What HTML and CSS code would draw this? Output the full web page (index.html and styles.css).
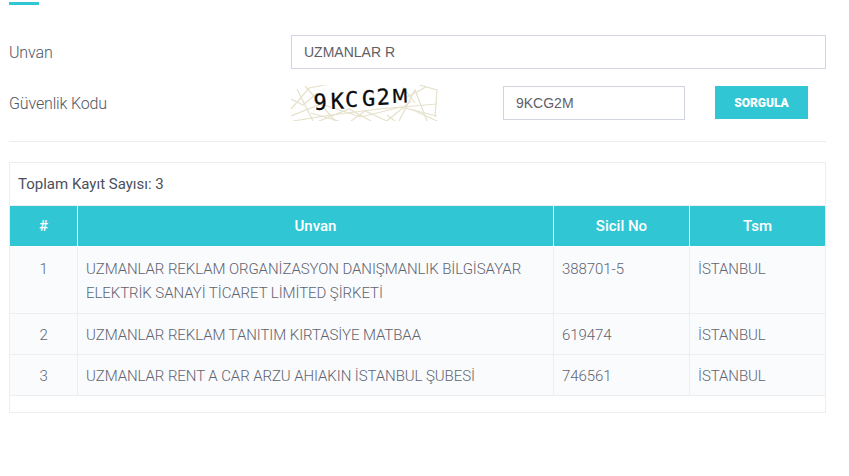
FILE: index.html
```html
<!DOCTYPE html>
<html lang="tr">
<head>
<meta charset="utf-8">
<title>Unvan Sorgulama</title>
<link rel="stylesheet" href="styles.css">
</head>
<body>
<main class="page">
  <div class="accent"></div>
  <form class="form">
    <div class="form-row">
      <label class="label">Unvan</label>
      <input class="input input-wide" type="text" value="UZMANLAR R">
    </div>
    <div class="form-row">
      <label class="label">Güvenlik Kodu</label>
      <div class="captcha-row">
        <svg class="captcha" width="147" height="36" viewBox="0 0 147 36">
          <g class="noise">
            <path d="M0 24 L18 3 L34 0"/>
            <path d="M0 31 L30 19 L70 32 L110 22 L146 31"/>
            <path d="M6 4 L22 36 M14 1 L34 24 L44 36"/>
            <path d="M2 36 L40 30 L88 24 L146 19"/>
            <path d="M28 36 L58 24 L80 36"/>
            <path d="M60 36 L74 26 L96 36 L120 16"/>
            <path d="M108 36 L124 5 L136 36 M120 24 L146 36"/>
            <path d="M128 0 L146 5 L144 32"/>
            <path d="M112 2 L124 18 M135 2 L116 12"/>
            <path d="M20 28 L48 36 M96 30 L104 36"/>
            <path d="M0 14 L12 20 L26 8"/>
          </g>
          <g class="captcha-text">
            <text x="23" y="25" transform="rotate(-3 23 25)">9</text>
            <text x="40" y="24" transform="rotate(-2 40 24)">K</text>
            <text x="54" y="22">C</text>
            <text x="71" y="21">G</text>
            <text x="86" y="20" transform="rotate(-3 86 20)">2</text>
            <text class="captcha-wide" x="101" y="18" transform="rotate(-2 101 18)">M</text>
          </g>
        </svg>
        <input class="input input-code" type="text" value="9KCG2M">
        <button class="button" type="button">SORGULA</button>
      </div>
    </div>
  </form>
  <hr class="divider">
  <section class="panel">
    <div class="total">Toplam Kayıt Sayısı: 3</div>
    <table class="table">
      <colgroup>
        <col class="col-no"><col class="col-name"><col class="col-sicil"><col class="col-tsm">
      </colgroup>
      <thead>
        <tr><th>#</th><th>Unvan</th><th>Sicil No</th><th>Tsm</th></tr>
      </thead>
      <tbody>
        <tr class="tall">
          <td class="num">1</td>
          <td>UZMANLAR REKLAM ORGANİZASYON DANIŞMANLIK BİLGİSAYAR ELEKTRİK SANAYİ TİCARET LİMİTED ŞİRKETİ</td>
          <td>388701-5</td>
          <td>İSTANBUL</td>
        </tr>
        <tr>
          <td class="num">2</td>
          <td>UZMANLAR REKLAM TANITIM KIRTASİYE MATBAA</td>
          <td>619474</td>
          <td>İSTANBUL</td>
        </tr>
        <tr>
          <td class="num">3</td>
          <td>UZMANLAR RENT A CAR ARZU AHIAKIN İSTANBUL ŞUBESİ</td>
          <td>746561</td>
          <td>İSTANBUL</td>
        </tr>
      </tbody>
    </table>
  </section>
</main>
</body>
</html>
```
FILE: styles.css
```css
* { box-sizing: border-box; }

html, body {
  margin: 0;
  background: #fff;
}

body {
  font-family: Roboto, "Liberation Sans", sans-serif;
  font-weight: 300;
  font-size: 16px;
  color: #5a5f6b;
}

.page {
  width: 826px;
  padding: 2px 0 0 9px;
}

.accent {
  width: 30px;
  height: 3px;
  background: #31c6d4;
}

.form {
  margin-top: 30px;
  display: flex;
  flex-direction: column;
  gap: 16px;
}

.form-row {
  display: grid;
  grid-template-columns: 282px 1fr;
  align-items: center;
}

.label {
  font-size: 16px;
  letter-spacing: -0.15px;
  color: #505665;
}

.input {
  height: 34px;
  border: 1px solid #d0d5df;
  background: #fff;
  padding: 0 12px;
  font-family: "Liberation Sans", Arial, sans-serif;
  font-size: 14px;
  color: #5f6068;
  outline: none;
  border-radius: 0;
}

.input-wide { width: 100%; }

.captcha-row {
  display: flex;
  align-items: center;
}

.captcha {
  flex: none;
  display: block;
  margin-right: 65px;
}

.noise path {
  fill: none;
  stroke: #e5e1cb;
  stroke-width: 1.2;
}

.captcha-text text {
  font-family: "DejaVu Sans Mono", monospace;
  font-size: 22px;
  font-weight: 400;
  fill: #0a0a0a;
  stroke: #0a0a0a;
  stroke-width: 0.3;
}

.captcha-text .captcha-wide {
  font-family: "DejaVu Sans", sans-serif;
  font-size: 19px;
}

.input-code { width: 182px; }

.button {
  width: 93px;
  height: 33px;
  margin: 0 0 1px 30px;
  border: 0;
  background: #31c6d4;
  color: #fff;
  font-family: Roboto, sans-serif;
  font-size: 12px;
  font-weight: 900;
}

.divider {
  margin: 20px 0;
  height: 1px;
  border: 0;
  background: #ecedf0;
}

.panel {
  border: 1px solid #eceef1;
  height: 251px;
}

.total {
  height: 43px;
  padding-left: 8px;
  line-height: 43px;
  font-size: 15px;
  font-weight: 400;
  color: #4a4f5c;
  border-bottom: 1px solid #eceef1;
}

.table {
  width: 100%;
  table-layout: fixed;
  border-collapse: separate;
  border-spacing: 0;
}

.col-no { width: 67px; }
.col-sicil { width: 136px; }
.col-tsm { width: 136px; }

.table th {
  height: 41px;
  background: #31c6d4;
  color: #fff;
  font-size: 15px;
  font-weight: 500;
  text-align: center;
  border-left: 1px solid #fff;
  border-bottom: 1px solid #fff;
  padding: 0;
}

.table th:first-child { border-left: 0; }

.table td {
  padding: 9px 8px 7px;
  vertical-align: top;
  line-height: 24px;
  font-size: 15px;
  font-weight: 300;
  letter-spacing: -0.08px;
  color: #5f6470;
  background: #fafbfd;
  border-left: 1px solid #eceef1;
  border-bottom: 1px solid #eceef1;
}

.table .tall td { padding: 10px 8px 8px; }

.table td:first-child { border-left: 0; }

.table td.num { text-align: center; }
```
